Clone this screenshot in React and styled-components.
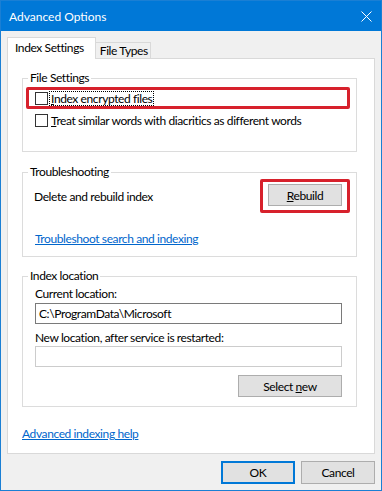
import React from "react";
import styled, { createGlobalStyle } from "styled-components";

const GlobalStyle = createGlobalStyle`
  html, body { margin: 0; padding: 0; background: #ffffff; }
  body {
    font-family: "Segoe UI", Lato, "Noto Sans", sans-serif;
    font-size: 12px;
    letter-spacing: -0.4px;
    color: #000;
  }
  * { box-sizing: border-box; }
`;

const Window = styled.div`
  width: 382px;
  height: 491px;
  border: 1px solid #1a7fd4;
  background: #f0f0f0;
  display: flex;
  flex-direction: column;
`;

const TitleBar = styled.div`
  height: 30px;
  flex: none;
  background: #0078d7;
  color: #ffffff;
  display: flex;
  align-items: center;
  justify-content: space-between;
  padding: 0 9px 0 8px;
  font-size: 12px;
  letter-spacing: 0;
`;

const Body = styled.div`
  flex: 1;
  display: flex;
  flex-direction: column;
  padding: 6px 6px 6px 6px;
`;

const TabStrip = styled.div`
  display: flex;
  align-items: flex-end;
  height: 22px;
  margin-bottom: -1px;
`;

const Tab = styled.div`
  position: relative;
  z-index: ${(p) => (p.$active ? 1 : 0)};
  height: ${(p) => (p.$active ? "22px" : "17px")};
  padding: ${(p) => (p.$active ? "2px 11px 0 7px" : "0 2px 0 4px")};
  background: ${(p) => (p.$active ? "#ffffff" : "#f0f0f0")};
  border: 1px solid #d9d9d9;
  border-bottom: ${(p) => (p.$active ? "none" : "1px solid #d9d9d9")};
  border-left: ${(p) => (p.$active ? "1px solid #d9d9d9" : "none")};
  display: flex;
  align-items: ${(p) => (p.$active ? "flex-start" : "center")};
  line-height: 16px;
  white-space: nowrap;
`;

const Panel = styled.div`
  flex: 1;
  background: #ffffff;
  border: 1px solid #d9d9d9;
  display: flex;
  flex-direction: column;
  padding: 11px 17px 0 14px;
`;

const Group = styled.fieldset`
  margin: ${(p) => p.$mt || 0}px 0 0 0;
  padding: 0 0 ${(p) => p.$pb || 0}px 0;
  border: 1px solid #dcdcdc;
  min-width: 0;
`;

const Legend = styled.legend`
  margin-left: 5px;
  padding: 0 2px;
  line-height: 16px;
  font-size: 12px;
`;

const Highlight = styled.div`
  border: 3px solid #d7212c;
  border-radius: 2px;
  margin: ${(p) => p.$margin || "0"};
  padding: ${(p) => p.$padding || "0"};
  display: flex;
  align-items: center;
  ${(p) => (p.$height ? `height: ${p.$height}px;` : "")}
`;

const CheckRow = styled.div`
  display: flex;
  align-items: center;
  height: 16px;
  padding-left: ${(p) => p.$indent || 0}px;
  margin-top: ${(p) => p.$mt || 0}px;
  gap: ${(p) => p.$gap || 3}px;
  white-space: nowrap;
`;

const CheckBox = styled.span`
  display: block;
  flex: none;
  width: 13px;
  height: 13px;
  border: 1px solid #333333;
  background: #ffffff;
`;

const FocusText = styled.span`
  outline: 1px dotted #000000;
  outline-offset: 0;
  padding: 0 1px;
  line-height: 13px;
`;

const Row = styled.div`
  display: flex;
  align-items: center;
  justify-content: space-between;
  padding-left: 11px;
  margin-top: -1px;
`;

const Button = styled.button`
  font: inherit;
  font-size: 12px;
  letter-spacing: -0.4px;
  color: #000;
  width: ${(p) => p.$w || 74}px;
  height: ${(p) => p.$h || 22}px;
  padding: 0;
  background: #e1e1e1;
  border: 1px solid ${(p) => (p.$default ? "#0078d7" : "#adadad")};
  box-shadow: ${(p) => (p.$default ? "inset 0 0 0 1px #0078d7" : "none")};
  flex: none;
`;

const Link = styled.a`
  display: block;
  color: #0066cc;
  text-decoration: underline;
  line-height: 16px;
  margin-top: ${(p) => p.$mt || 0}px;
  padding-left: ${(p) => p.$indent || 0}px;
  white-space: nowrap;
`;

const FieldBlock = styled.div`
  padding-left: 12px;
  width: 319px;
  display: flex;
  flex-direction: column;
`;

const FieldLabel = styled.div`
  line-height: 16px;
  margin-top: ${(p) => p.$mt || 0}px;
  white-space: nowrap;
`;

const TextBox = styled.div`
  height: 21px;
  margin-top: ${(p) => p.$mt || 0}px;
  border: 1px solid ${(p) => (p.$disabled ? "#cccccc" : "#7a7a7a")};
  background: #ffffff;
  padding-left: 3px;
  display: flex;
  align-items: center;
  white-space: nowrap;
`;

const ButtonRow = styled.div`
  display: flex;
  justify-content: flex-end;
  margin-top: ${(p) => p.$mt || 0}px;
  gap: ${(p) => p.$gap || 0}px;
`;

const CloseIcon = () => (
  <svg width="11" height="11" viewBox="0 0 11 11" aria-hidden="true">
    <path d="M0.5 0.5 L10.5 10.5 M10.5 0.5 L0.5 10.5" stroke="#ffffff" strokeWidth="1" fill="none" />
  </svg>
);

export default function App() {
  return (
    <>
      <GlobalStyle />
      <Window>
        <TitleBar>
          <span>Advanced Options</span>
          <CloseIcon />
        </TitleBar>
        <Body>
          <TabStrip>
            <Tab $active>Index Settings</Tab>
            <Tab>File Types</Tab>
          </TabStrip>
          <Panel>
            <Group $pb={23}>
              <Legend>File Settings</Legend>
              <Highlight $margin="1px 6px 0 3px" $padding="0 0 0 6px" $height={22}>
                <CheckRow $gap={2}>
                  <CheckBox />
                  <FocusText>
                    <u>I</u>ndex encrypted files
                  </FocusText>
                </CheckRow>
              </Highlight>
              <CheckRow $indent={12} $mt={3}>
                <CheckBox />
                <span>
                  <u>T</u>reat similar words with diacritics as different words
                </span>
              </CheckRow>
            </Group>

            <Group $mt={12} $pb={9}>
              <Legend>Troubleshooting</Legend>
              <Row>
                <span>Delete and rebuild index</span>
                <Highlight $margin="0 6px 0 0" $padding="2px 5px 4px 5px">
                  <Button>
                    <u>R</u>ebuild
                  </Button>
                </Highlight>
              </Row>
              <Link href="#" $mt={18} $indent={12}>
                Troubleshoot search and indexing
              </Link>
            </Group>

            <Group $mt={11} $pb={9}>
              <Legend>Index location</Legend>
              <FieldBlock>
                <FieldLabel $mt={2}>Current location:</FieldLabel>
                <TextBox $mt={1}>C:\ProgramData\Microsoft</TextBox>
                <FieldLabel $mt={6}>New location, after service is restarted:</FieldLabel>
                <TextBox $disabled />
                <ButtonRow $mt={8}>
                  <Button $w={104}>
                    Select <u>n</u>ew
                  </Button>
                </ButtonRow>
              </FieldBlock>
            </Group>

            <Link href="#" $mt={19}>
              Advanced indexing help
            </Link>
          </Panel>
          <ButtonRow $mt={7} $gap={6}>
            <Button $default $h={23}>OK</Button>
            <Button $h={23}>Cancel</Button>
          </ButtonRow>
        </Body>
      </Window>
    </>
  );
}
